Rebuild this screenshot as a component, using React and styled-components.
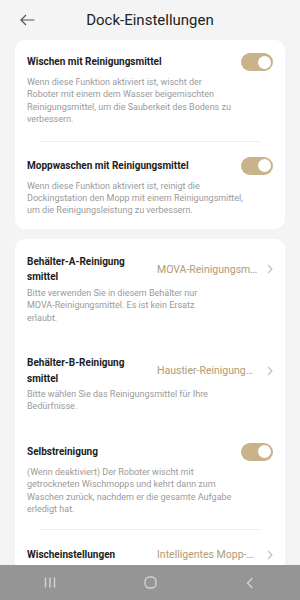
import React from "react";
import styled, { createGlobalStyle } from "styled-components";

const GlobalStyle = createGlobalStyle`
  body {
    margin: 0;
    background: #f4f4f4;
    font-family: Roboto, "Noto Sans", sans-serif;
  }
`;

const Page = styled.div`
  width: 300px;
  min-height: 600px;
  background: #f4f4f4;
  padding-bottom: 40px;
`;

const Header = styled.div`
  display: grid;
  grid-template-columns: 40px 1fr 40px;
  align-items: center;
  height: 40px;
`;

const BackButton = styled.div`
  display: flex;
  align-items: center;
  padding-left: 20px;
  height: 40px;
`;

const Title = styled.div`
  text-align: center;
  font-size: 15px;
  color: #222;
`;

const Card = styled.div`
  background: #fff;
  border-radius: 10px;
  margin: 0 15px 10px;
  padding: 0 12px;
`;

const Row = styled.div`
  display: grid;
  grid-template-columns: ${(p) => (p.$value ? "130px 1fr 15px" : "1fr 32px")};
  align-items: center;
  padding: ${(p) => p.$pad || "14px 0"};
`;

const RowTitle = styled.div`
  font-size: 10px;
  font-weight: 700;
  color: #1c1c1c;
  line-height: ${(p) => (p.$multi ? "15.5px" : "16px")};
  ${(p) => p.$multi && "max-width: 120px;"}
`;

const Desc = styled.div`
  grid-column: ${(p) => (p.$value ? "1 / 4" : "1 / 3")};
  font-size: 9px;
  line-height: 12.4px;
  color: #9a9a9a;
  margin-top: ${(p) => p.$mt || "5px"};
  max-width: ${(p) => p.$max || "214px"};
`;

const Value = styled.div`
  font-size: 10.5px;
  color: #b19a72;
  white-space: nowrap;
  overflow: hidden;
  text-overflow: ellipsis;
`;

const Chevron = styled.div`
  display: flex;
  justify-content: flex-end;
`;

const Toggle = styled.div`
  width: 32px;
  height: 18px;
  border-radius: 9px;
  background: #c8b38a;
  display: flex;
  align-items: center;
  justify-content: flex-end;
  padding-right: 2.5px;
  box-sizing: border-box;
`;

const Knob = styled.div`
  width: 13px;
  height: 13px;
  border-radius: 50%;
  background: #fff;
`;

const Divider = styled.div`
  height: 1px;
  background: #efefef;
  margin: 0 12px;
`;

const NavBar = styled.div`
  position: fixed;
  left: 0;
  right: 0;
  bottom: 0;
  height: 35px;
  background: #959595;
  display: grid;
  grid-template-columns: repeat(3, 1fr);
  align-items: center;
  justify-items: center;
`;

const ChevronIcon = () => (
  <svg width="6" height="10" viewBox="0 0 6 10">
    <path d="M1 1 L5 5 L1 9" fill="none" stroke="#bdbdbd" strokeWidth="1.1" />
  </svg>
);

function ToggleRow({ title, desc, pad, descWidth }) {
  return (
    <Row $pad={pad}>
      <RowTitle>{title}</RowTitle>
      <Toggle>
        <Knob />
      </Toggle>
      <Desc $max={descWidth}>{desc}</Desc>
    </Row>
  );
}

function ValueRow({ title, value, desc, pad, multi = true }) {
  return (
    <Row $value $pad={pad}>
      <RowTitle $multi={multi}>{title}</RowTitle>
      <Value>{value}</Value>
      <Chevron>
        <ChevronIcon />
      </Chevron>
      {desc && (
        <Desc $value $max="190px" $mt="2px">
          {desc}
        </Desc>
      )}
    </Row>
  );
}

export default function App() {
  return (
    <Page>
      <GlobalStyle />
      <Header>
        <BackButton>
          <svg width="15" height="12" viewBox="0 0 15 12">
            <path d="M14.5 6 H1 M6 1 L1 6 L6 11" fill="none" stroke="#555" strokeWidth="1.2" />
          </svg>
        </BackButton>
        <Title>Dock-Einstellungen</Title>
        <div />
      </Header>

      <Card>
        <ToggleRow
          pad="13px 0 15px"
          descWidth="205px"
          title="Wischen mit Reinigungsmittel"
          desc="Wenn diese Funktion aktiviert ist, wischt der Roboter mit einem dem Wasser beigemischten Reinigungsmittel, um die Sauberkeit des Bodens zu verbessern."
        />
        <Divider />
        <ToggleRow
          pad="15px 0 12px"
          descWidth="222px"
          title="Moppwaschen mit Reinigungsmittel"
          desc="Wenn diese Funktion aktiviert ist, reinigt die Dockingstation den Mopp mit einem Reinigungsmittel, um die Reinigungsleistung zu verbessern."
        />
      </Card>

      <Card>
        <ValueRow
          pad="15px 0 17px"
          title={
            <>
              Behälter-A-Reinigung<wbr />smittel
            </>
          }
          value="MOVA-Reinigungsmittel"
          desc="Bitte verwenden Sie in diesem Behälter nur MOVA-Reinigungsmittel. Es ist kein Ersatz erlaubt."
        />
        <ValueRow
          pad="14px 0 15px"
          title={
            <>
              Behälter-B-Reinigung<wbr />smittel
            </>
          }
          value="Haustier-Reinigungsmittel"
          desc="Bitte wählen Sie das Reinigungsmittel für Ihre Bedürfnisse."
        />
        <ToggleRow
          pad="15px 0 13px"
          title="Selbstreinigung"
          desc="(Wenn deaktiviert) Der Roboter wischt mit getrockneten Wischmopps und kehrt dann zum Waschen zurück, nachdem er die gesamte Aufgabe erledigt hat."
        />
        <Divider />
        <ValueRow pad="17px 0" multi={false} title="Wischeinstellungen" value="Intelligentes Mopp-Waschen" />
      </Card>

      <NavBar>
        <svg width="12" height="11" viewBox="0 0 12 11">
          <path d="M1.5 0.5 V10.5 M6 0.5 V10.5 M10.5 0.5 V10.5" stroke="#d4d4d4" strokeWidth="1.4" />
        </svg>
        <svg width="13" height="13" viewBox="0 0 13 13">
          <rect x="1" y="1" width="11" height="11" rx="4.5" fill="none" stroke="#d4d4d4" strokeWidth="1.4" />
        </svg>
        <svg width="8" height="12" viewBox="0 0 8 12">
          <path d="M6.5 1 L1.5 6 L6.5 11" fill="none" stroke="#d4d4d4" strokeWidth="1.4" />
        </svg>
      </NavBar>
    </Page>
  );
}
